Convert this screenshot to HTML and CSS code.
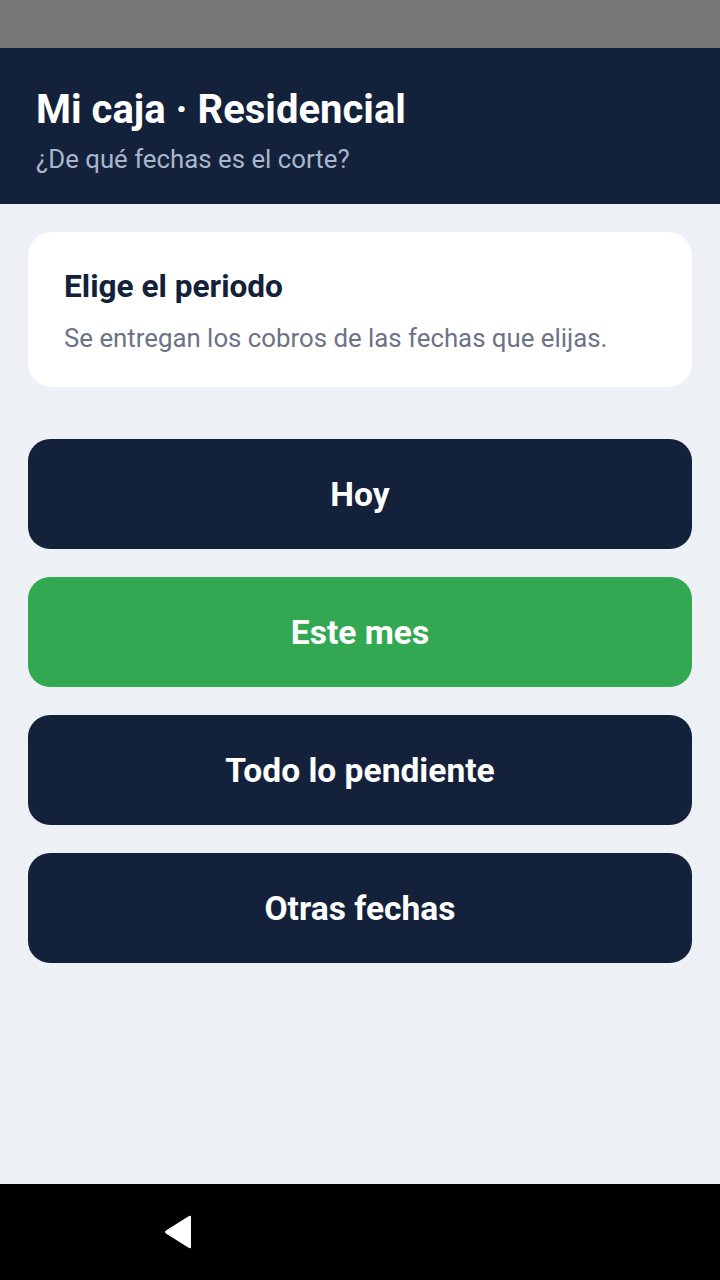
FILE: index.html
```html
<!DOCTYPE html>
<html lang="es">

<head>
    <meta charset="UTF-8">
    <meta name="viewport" content="width=device-width, initial-scale=1.0">
    <title>Mi caja · Residencial</title>
    <link rel="stylesheet" href="styles.css">
</head>

<body>
    <div class="screen">
        <div class="status-bar"></div>

        <header class="top">
            <h1>Mi caja · Residencial</h1>
            <p>¿De qué fechas es el corte?</p>
        </header>

        <main class="content">
            <section class="card">
                <h2>Elige el periodo</h2>
                <p>Se entregan los cobros de las fechas que elijas.</p>
            </section>

            <div class="options">
                <button class="option">Hoy</button>
                <button class="option active">Este mes</button>
                <button class="option">Todo lo pendiente</button>
                <button class="option">Otras fechas</button>
            </div>
        </main>

        <nav class="nav-bar">
            <svg class="back" width="32" height="36" viewBox="0 0 32 36">
                <path d="M27 2 L4 16.5 Q2 18 4 19.5 L27 34 Q29 35 29 33 L29 3 Q29 1 27 2 Z" fill="#fff" />
            </svg>
        </nav>
    </div>
</body>

</html>
```

FILE: styles.css
```css
* {
    box-sizing: border-box;
    margin: 0;
    padding: 0;
    font-family: Roboto, 'Noto Sans', sans-serif;
}

body {
    background-color: #edf1f6;
}

.screen {
    display: flex;
    flex-direction: column;
    width: 720px;
    height: 1280px;
}

.status-bar {
    height: 48px;
    background: #777777;
}

.top {
    height: 156px;
    background: #13213b;
    padding: 37px 36px 0;
}

.top h1 {
    color: #fff;
    font-size: 40px;
    font-weight: 700;
    line-height: 50px;
}

.top p {
    margin-top: 8px;
    color: #a9b7cc;
    font-size: 25.8px;
    line-height: 32px;
}

.content {
    flex: 1;
    padding: 28px;
}

.card {
    height: 155px;
    background: #fff;
    border-radius: 24px;
    padding: 36px 36px 0;
}

.card h2 {
    color: #13213b;
    font-size: 31.6px;
    font-weight: 700;
    line-height: 38px;
}

.card p {
    margin-top: 16px;
    color: #6b7385;
    font-size: 25.8px;
    line-height: 32px;
}

.options {
    display: flex;
    flex-direction: column;
    gap: 28px;
    margin-top: 52px;
}

.option {
    height: 110px;
    border: none;
    border-radius: 22px;
    background: #13213b;
    color: #fff;
    font-size: 33.6px;
    font-weight: 700;
    cursor: pointer;
}

.option.active {
    background: #32a852;
}

.nav-bar {
    height: 96px;
    background: #000;
    display: flex;
    align-items: center;
    padding-left: 162px;
}
```
